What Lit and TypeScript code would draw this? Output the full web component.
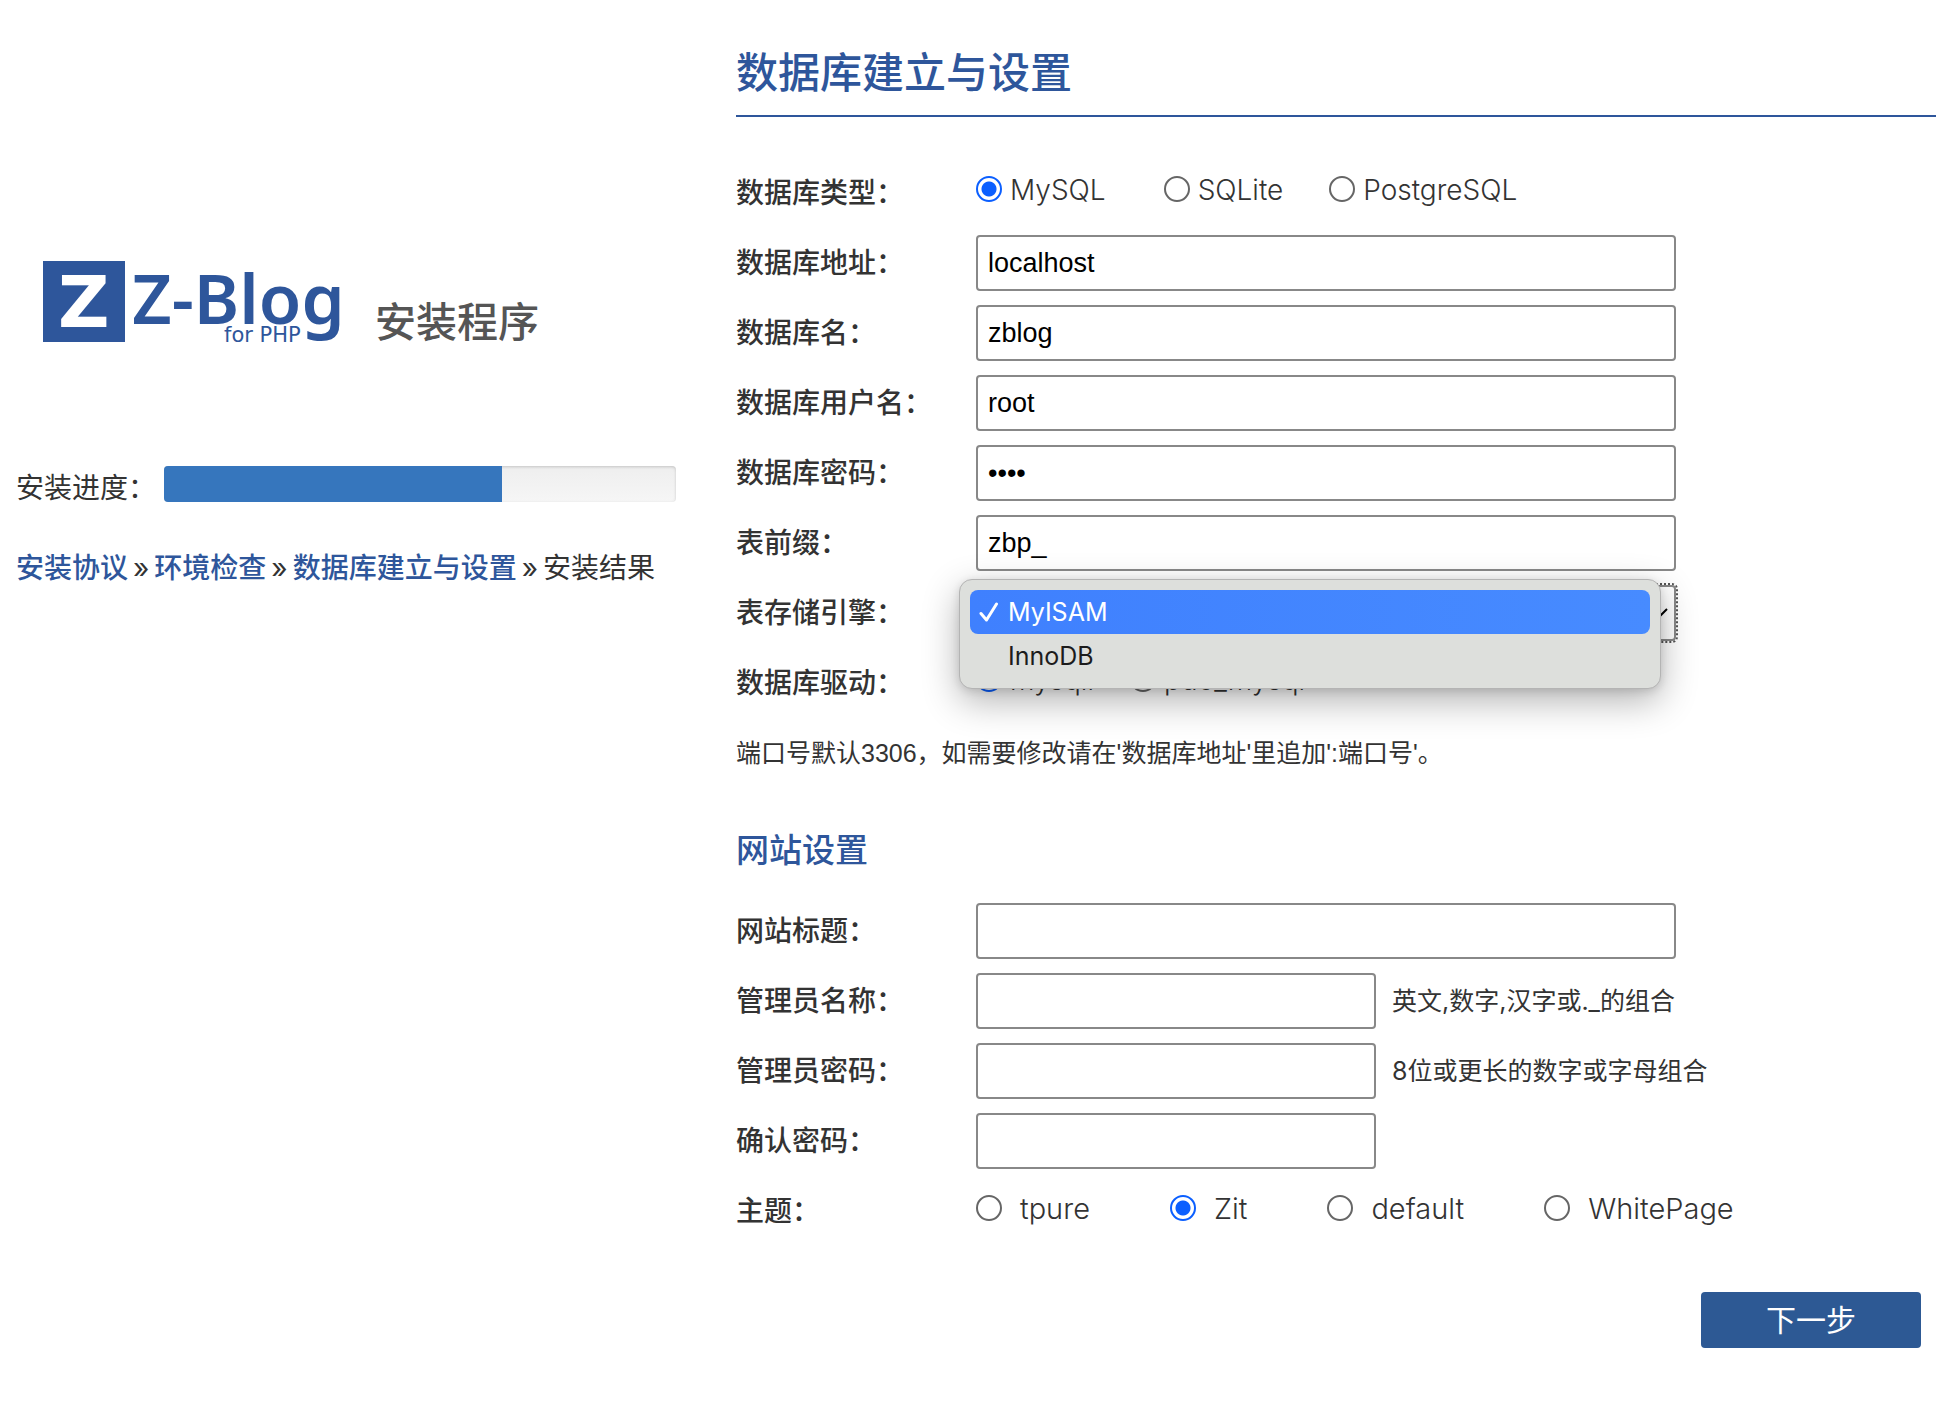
import { LitElement, html, css, svg, nothing } from "lit";
import { customElement, state } from "lit/decorators.js";

interface TextField {
  id: string;
  label: string;
  value?: string;
  type?: string;
  note?: string;
  short?: boolean;
}

const databaseFields: TextField[] = [
  { id: "dbserver", label: "数据库地址", value: "localhost" },
  { id: "dbname", label: "数据库名", value: "zblog" },
  { id: "dbuser", label: "数据库用户名", value: "root" },
  { id: "dbpassword", label: "数据库密码", value: "root", type: "password" },
  { id: "dbprefix", label: "表前缀", value: "zbp_" },
];

const siteFields: TextField[] = [
  { id: "sitetitle", label: "网站标题" },
  { id: "username", label: "管理员名称", note: "英文,数字,汉字或._的组合", short: true },
  { id: "password", label: "管理员密码", type: "password", note: "8位或更长的数字或字母组合", short: true },
  { id: "repassword", label: "确认密码", type: "password", short: true },
];

const engines = ["MyISAM", "InnoDB"];

@customElement("app-root")
export class AppRoot extends LitElement {
  @state() private engine = "MyISAM";
  @state() private open = true;
  private progress = 66;

  static styles = css`
    :host {
      display: block;
      --blue: #2e569b;
      --ink: #333;
      color: var(--ink);
      font: 400 28px/40px "Inter", "Noto Sans CJK SC", sans-serif;
    }
    * { box-sizing: border-box; }
    .page {
      display: grid;
      grid-template-columns: 3fr 5fr;
      padding: 0 16px 60px;
      min-height: 100vh;
      background: #fff;
    }
    .brand {
      display: flex;
      align-items: flex-end;
      gap: 30px;
      margin: 260px 0 0 27px;
    }
    .logo { display: block; width: 302px; height: 86px; overflow: visible; }
    .brand-title {
      margin: 0;
      font-size: 41px;
      line-height: 48px;
      font-weight: 500;
      color: #555;
    }
    .progress-row {
      display: flex;
      align-items: flex-start;
      gap: 8px;
      margin: 120px 60px 0 0;
    }
    .progress-label { padding-top: 2px; }
    .bar {
      flex: 1;
      height: 36px;
      border-radius: 4px;
      overflow: hidden;
      background: linear-gradient(#eee, #f6f6f6);
      box-shadow: inset 0 1px 3px rgba(0, 0, 0, 0.18);
    }
    .fill { height: 100%; background: #3676bd; }
    .crumbs { display: flex; gap: 5px; margin-top: 40px; white-space: nowrap; }
    .crumbs a { color: var(--blue); font-weight: 500; text-decoration: none; }
    .title {
      margin: 0 0 41px;
      padding: 43px 0 12px;
      border-bottom: 2px solid var(--blue);
      color: var(--blue);
      font-size: 42px;
      line-height: 60px;
      font-weight: 500;
    }
    .subtitle {
      margin: 59px 0 26px;
      color: var(--blue);
      font-size: 33px;
      line-height: 40px;
      font-weight: 500;
    }
    .row {
      display: grid;
      grid-template-columns: 1fr 4fr;
      align-items: center;
      min-height: 70px;
    }
    .label { font-weight: 500; }
    .field { display: flex; align-items: center; gap: 16px; }
    .input, .select {
      width: 100%;
      max-width: 700px;
      height: 56px;
      padding: 0 10px;
      border: 2px solid #888;
      border-radius: 4px;
      background: #fff;
      color: #000;
      font: 27px/40px "Liberation Sans", sans-serif;
    }
    .short .input { max-width: 400px; }
    .select {
      appearance: none;
      outline: 2px dotted #555;
      outline-offset: 0;
    }
    .picker { position: relative; width: 100%; max-width: 700px; display: flex; }
    .chevron { position: absolute; right: 8px; top: 23px; width: 16px; height: 10px; }
    .menu {
      position: absolute;
      z-index: 2;
      left: -17px;
      right: 15px;
      top: -6px;
      margin: 0;
      padding: 10px;
      list-style: none;
      border: 1px solid #b4b4b4;
      border-radius: 13px;
      background: #dddfdc;
      box-shadow: 0 12px 36px rgba(0, 0, 0, 0.3), 0 2px 8px rgba(0, 0, 0, 0.12);
      color: #1c1c1c;
      font: 25px/44px "Inter", sans-serif;
    }
    .option {
      display: flex;
      align-items: center;
      gap: 9px;
      padding: 0 9px;
      border-radius: 8px;
    }
    .option.chosen { background: linear-gradient(90deg, #3f80fe, #478bff); color: #fff; }
    .tick { width: 20px; height: 20px; }
    .note { font-size: 25px; white-space: nowrap; }
    .hint {
      margin: 17px 0 0;
      font: 25px/36px "Liberation Sans", "Noto Sans CJK SC", sans-serif;
    }
    .choices { display: flex; align-items: center; gap: 48px; padding-bottom: 6px; }
    .choice { display: flex; align-items: center; gap: 8px; font-weight: 300; line-height: 34px; }
    .types { gap: 46px; }
    .types .choice:first-child { margin-right: 12px; }
    .drivers { gap: 36px; }
    .themes { gap: 80px; padding-bottom: 4px; }
    .themes .choice { gap: 18px; font-size: 29px; }
    .radio {
      appearance: none;
      width: 26px;
      height: 26px;
      margin: 0 0 2px;
      border: 2px solid #666;
      border-radius: 50%;
      background: #fff;
    }
    .radio:checked {
      border-color: #0b5fff;
      background: radial-gradient(circle, #0b5fff 7px, #fff 8px);
    }
    .actions { display: flex; justify-content: flex-end; margin: 46px 15px 0 0; }
    .next {
      width: 220px;
      height: 56px;
      padding: 0;
      border: 0;
      border-radius: 4px;
      background: #2d5994;
      color: #fff;
      font: 400 30px/40px "Inter", "Noto Sans CJK SC", sans-serif;
    }
  `;

  private renderLogo() {
    return html`<svg class="logo" viewBox="0 0 302 86" role="img" aria-label="Z-Blog for PHP">
      <rect x="0" y="1" width="82" height="81" fill="#2e569b"></rect>
      <text x="15" y="67" font-family="DejaVu Sans" font-weight="700" font-size="71" fill="#fff">Z</text>
      <text x="89" y="64" font-family="Noto Sans" font-weight="600" font-size="69" fill="#2e569b">Z-Blog</text>
      <text x="181" y="82" font-family="DejaVu Sans" font-size="21" fill="#2e569b">for PHP</text>
    </svg>`;
  }

  private renderText(f: TextField) {
    return html`<div class="row ${f.short ? "short" : ""}">
      <label class="label" for=${f.id}>${f.label}：</label>
      <div class="field">
        <input class="input" id=${f.id} type=${f.type ?? "text"} .value=${f.value ?? ""} />
        ${f.note ? html`<span class="note">${f.note}</span>` : nothing}
      </div>
    </div>`;
  }

  private renderRadios(name: string, label: string, options: string[], chosen: string, kind: string) {
    return html`<div class="row" role="radiogroup" aria-labelledby=${name}>
      <span class="label" id=${name}>${label}：</span>
      <div class="choices ${kind}">
        ${options.map((o) => html`<label class="choice">
          <input class="radio" type="radio" name=${name} value=${o} ?checked=${o === chosen} />${o}
        </label>`)}
      </div>
    </div>`;
  }

  private pick(engine: string) {
    this.engine = engine;
    this.open = false;
  }

  private renderEngine() {
    return html`<div class="row">
      <label class="label" for="dbengine">表存储引擎：</label>
      <div class="field">
        <div class="picker">
          <select class="select" id="dbengine" .value=${this.engine}
            @change=${(e: Event) => this.pick((e.target as HTMLSelectElement).value)}>
            ${engines.map((e) => html`<option ?selected=${e === this.engine}>${e}</option>`)}
          </select>
          <svg class="chevron" viewBox="0 0 16 10" aria-hidden="true">
            <path d="M1 1l7 7 7-7" fill="none" stroke="#000" stroke-width="2"></path>
          </svg>
          ${this.open
            ? html`<ul class="menu" role="listbox" aria-label="表存储引擎">
                ${engines.map((e) => html`<li class="option ${e === this.engine ? "chosen" : ""}" role="option"
                  aria-selected=${e === this.engine} @click=${() => this.pick(e)}>
                  <svg class="tick" viewBox="0 0 20 20" aria-hidden="true">
                    ${e === this.engine
                      ? svg`<path d="M2 11.5l5.5 6.5L17.5 2" fill="none" stroke="#fff" stroke-width="3" stroke-linecap="round" stroke-linejoin="round"></path>`
                      : nothing}
                  </svg>${e}</li>`)}
              </ul>`
            : nothing}
        </div>
      </div>
    </div>`;
  }

  render() {
    return html`<div class="page" lang="zh-CN">
      <aside>
        <div class="brand">
          ${this.renderLogo()}
          <p class="brand-title">安装程序</p>
        </div>
        <div class="progress-row">
          <span class="progress-label" id="progress">安装进度：</span>
          <div class="bar" role="progressbar" aria-labelledby="progress" aria-valuenow=${this.progress}>
            <div class="fill" style="width:${this.progress}%"></div>
          </div>
        </div>
        <nav class="crumbs">
          <a href="#license">安装协议</a><span>»</span>
          <a href="#check">环境检查</a><span>»</span>
          <a href="#database">数据库建立与设置</a><span>»</span>
          <span>安装结果</span>
        </nav>
      </aside>
      <main>
        <h1 class="title">数据库建立与设置</h1>
        ${this.renderRadios("dbtype", "数据库类型", ["MySQL", "SQLite", "PostgreSQL"], "MySQL", "types")}
        ${databaseFields.map((f) => this.renderText(f))}
        ${this.renderEngine()}
        ${this.renderRadios("dbdriver", "数据库驱动", ["mysqli", "pdo_mysql"], "mysqli", "drivers")}
        <p class="hint">端口号默认3306，如需要修改请在'数据库地址'里追加':端口号'。</p>
        <h2 class="subtitle">网站设置</h2>
        ${siteFields.map((f) => this.renderText(f))}
        ${this.renderRadios("theme", "主题", ["tpure", "Zit", "default", "WhitePage"], "Zit", "themes")}
        <div class="actions"><button class="next" type="button">下一步</button></div>
      </main>
    </div>`;
  }
}
